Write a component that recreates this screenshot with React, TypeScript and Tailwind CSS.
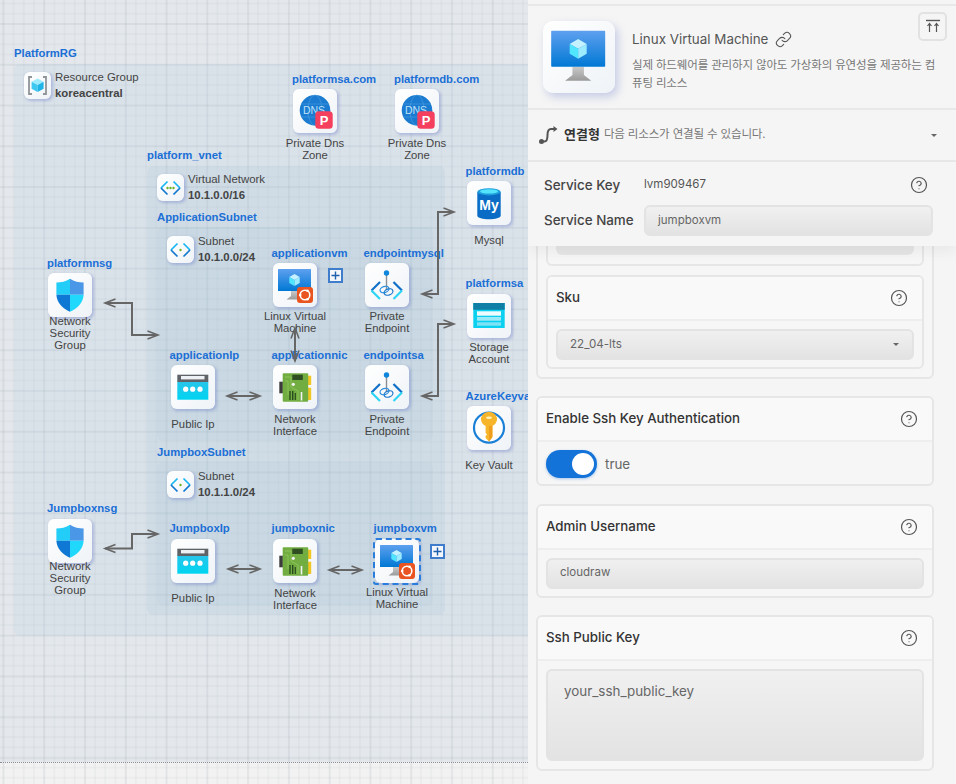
import React from "react";
import { CircleHelp, Link } from "lucide-react";

function Defs() {
  return (
    <svg className="absolute h-0 w-0">
      <defs>
        <linearGradient id="mon" x1="0" y1="0" x2="0" y2="1">
          <stop offset="0" stopColor="#5ea0ef" />
          <stop offset="1" stopColor="#0078d4" />
        </linearGradient>
        <linearGradient id="stand" x1="0" y1="0" x2="0" y2="1">
          <stop offset="0" stopColor="#c9c9c9" />
          <stop offset="1" stopColor="#9a9a9a" />
        </linearGradient>
        <linearGradient id="cyan" x1="0" y1="0" x2="0" y2="1">
          <stop offset="0" stopColor="#27c5ea" />
          <stop offset="1" stopColor="#00d4f0" />
        </linearGradient>
      </defs>
    </svg>
  );
}

function VmIcon({ badge = true }: { badge?: boolean }) {
  return (
    <svg viewBox="0 0 44 44" className="h-full w-full">
      <polygon points="18,28 25,28 25,33 29.5,36.5 13.5,36.5 18,33" fill="url(#stand)" />
      <rect x="5" y="6" width="33" height="22" rx="0.5" fill="url(#mon)" />
      <polygon points="21.5,11 26.7,14 21.5,17 16.3,14" fill="#c3f1ff" />
      <polygon points="16.3,14 21.5,17 21.5,23 16.3,20" fill="#50e6ff" />
      <polygon points="26.7,14 21.5,17 21.5,23 26.7,20" fill="#9cebff" />
      {badge && (
        <g>
          <rect x="24" y="24" width="16" height="16" rx="3" fill="#e95420" />
          <circle cx="32" cy="32" r="4.8" fill="none" stroke="#fff" strokeWidth="1.6" />
          <circle cx="27.2" cy="32" r="1.3" fill="#fff" />
          <circle cx="34.5" cy="27.8" r="1.3" fill="#fff" />
          <circle cx="34.5" cy="36.2" r="1.3" fill="#fff" />
        </g>
      )}
    </svg>
  );
}

function EndpointIcon() {
  return (
    <svg viewBox="0 0 44 44" className="h-full w-full">
      <line x1="21.5" y1="10" x2="21.5" y2="27" stroke="#8a8f96" strokeWidth="1.4" />
      <circle cx="21.5" cy="10" r="2.7" fill="#0f86dc" />
      <path d="M15 19 L6.5 27.5" stroke="#0f6fc8" strokeWidth="2.2" fill="none" />
      <path d="M6.5 27.5 L15 36" stroke="#2cd5f5" strokeWidth="2.2" fill="none" />
      <path d="M28.5 19 L37 27.5" stroke="#0f6fc8" strokeWidth="2.2" fill="none" />
      <path d="M37 27.5 L28.5 36" stroke="#2cd5f5" strokeWidth="2.2" fill="none" />
      <ellipse cx="19.5" cy="26.5" rx="4.6" ry="3" fill="none" stroke="#2a8fe0" strokeWidth="1.2" transform="rotate(-20 19.5 26.5)" />
      <ellipse cx="23.5" cy="29" rx="4.6" ry="3" fill="none" stroke="#1b78cc" strokeWidth="1.2" transform="rotate(-20 23.5 29)" />
    </svg>
  );
}

function NicIcon() {
  return (
    <svg viewBox="0 0 44 44" className="h-full w-full">
      <rect x="6.3" y="16.7" width="3.6" height="11.6" fill="#3c3c3c" />
      <rect x="35" y="10.7" width="3.2" height="9.3" fill="#f2c522" />
      <rect x="35" y="22.7" width="3.2" height="12.3" fill="#f2c522" />
      <rect x="9.7" y="8.3" width="25.5" height="28.4" rx="1" fill="#72ad42" />
      <path d="M12 12 H18 V22 L25 26 V35 M12 16 H15 V30" stroke="#95c95f" strokeWidth="0.8" fill="none" />
      <rect x="19.3" y="9.7" width="10.5" height="5.3" fill="#2f4f23" />
      <circle cx="20.3" cy="19.3" r="1.6" fill="#f2f2f2" />
      <rect x="16.3" y="26" width="1.4" height="9" fill="#284a1f" />
      <rect x="19" y="26" width="1.4" height="9" fill="#284a1f" />
      <rect x="21.7" y="28" width="1.2" height="7" fill="#284a1f" />
      <rect x="27.7" y="27" width="1.6" height="8.5" fill="#f2f2f2" />
    </svg>
  );
}

function IpIcon() {
  return (
    <svg viewBox="0 0 44 44" className="h-full w-full">
      <rect x="6.3" y="16.5" width="31" height="18.2" fill="url(#cyan)" />
      <rect x="6.3" y="9.7" width="31" height="7.3" fill="#5f6368" />
      <rect x="10" y="11" width="23.5" height="3.4" fill="#eef1f3" />
      <circle cx="14.7" cy="24.2" r="2.6" fill="#fff" />
      <circle cx="21.7" cy="24.2" r="2.6" fill="#fff" />
      <circle cx="29" cy="24.2" r="2.6" fill="#fff" />
    </svg>
  );
}

function ShieldIcon() {
  return (
    <svg viewBox="0 0 44 44" className="h-full w-full">
      <path d="M22 5.7 C18 8.6 13 9.4 8.4 9.6 V21.7 H22 Z" fill="#22cdf7" />
      <path d="M22 5.7 C26 8.6 31 9.4 35.6 9.6 V21.7 H22 Z" fill="#4a97e8" />
      <path d="M8.4 21.7 C8.8 30 15 35.5 22 38.7 V21.7 Z" fill="#0f78d4" />
      <path d="M35.6 21.7 C35.2 30 29 35.5 22 38.7 V21.7 Z" fill="#20d8fb" />
    </svg>
  );
}

function StorageIcon() {
  return (
    <svg viewBox="0 0 44 44" className="h-full w-full">
      <rect x="6.3" y="9" width="31.4" height="25" rx="0.6" fill="#0cd0ef" />
      <rect x="6.3" y="9" width="31.4" height="6.8" fill="#0f7fa6" />
      <rect x="10" y="17.3" width="24" height="4.4" fill="#eefcff" />
      <rect x="10" y="23" width="24" height="3.7" fill="#9ceaf8" />
      <rect x="10" y="28.3" width="24" height="3.4" fill="#7ee3f5" />
    </svg>
  );
}

function KeyIcon() {
  return (
    <svg viewBox="0 0 44 44" className="h-full w-full">
      <circle cx="22" cy="21.7" r="15" fill="#fff" stroke="#1a7fd6" strokeWidth="2.2" />
      <path d="M18.6 20 A8 7.5 0 1 1 25.4 20 V31 L22 35.5 L18.6 32 V30 L20 28.5 L18.6 27 Z" fill="#f7b52c" />
      <path d="M22 20 H25.4 V31 L22 35.5 Z" fill="#f09f1c" />
      <ellipse cx="22" cy="11.8" rx="3" ry="1.2" fill="#fff1b8" />
    </svg>
  );
}

function MysqlIcon() {
  return (
    <svg viewBox="0 0 44 44" className="h-full w-full">
      <path d="M10.3 11 V34.5 C10.3 37 16 38.3 22 38.3 C28 38.3 33.7 37 33.7 34.5 V11 Z" fill="#0a6cc4" />
      <ellipse cx="22" cy="10.8" rx="11.7" ry="3.6" fill="#1e9fdc" />
      <ellipse cx="22" cy="10.4" rx="9" ry="2.2" fill="#54e4fb" />
      <text x="22" y="28.5" textAnchor="middle" fontSize="14" fontWeight="700" fill="#fff" fontFamily="Liberation Sans, sans-serif">My</text>
    </svg>
  );
}

function DnsIcon() {
  return (
    <svg viewBox="0 0 44 44" className="h-full w-full">
      <circle cx="22" cy="21.3" r="15.3" fill="#1a7bd0" />
      <ellipse cx="22" cy="21.3" rx="7" ry="15.3" fill="none" stroke="#4b9fe3" strokeWidth="0.6" />
      <path d="M8 15 H36 M8 28 H36" stroke="#4b9fe3" strokeWidth="0.6" />
      <text x="21" y="25" textAnchor="middle" fontSize="10.5" fill="#bfe3fb" fontFamily="Liberation Sans, sans-serif">DNS</text>
      <rect x="22.3" y="22.3" width="17.4" height="17.4" rx="3.5" fill="#f43f5e" />
      <text x="31" y="35.5" textAnchor="middle" fontSize="13" fontWeight="700" fill="#fff" fontFamily="Liberation Sans, sans-serif">P</text>
    </svg>
  );
}

function RgIcon() {
  return (
    <svg viewBox="0 0 27 27" className="h-full w-full">
      <path d="M8 5 H5 V22 H8 M19 5 H22 V22 H19" fill="none" stroke="#8f9499" strokeWidth="1.8" />
      <polygon points="13.6,6.5 19.6,9.8 13.6,13 7.6,9.8" fill="#9cebff" />
      <polygon points="7.6,9.8 13.6,13 13.6,20 7.6,16.8" fill="#3cc8f0" />
      <polygon points="19.6,9.8 13.6,13 13.6,20 19.6,16.8" fill="#1fb4e8" />
    </svg>
  );
}

function NetIcon({ dots }: { dots: number[] }) {
  return (
    <svg viewBox="0 0 27 27" className="h-full w-full">
      <path d="M10.5 7.5 L4 14" stroke="#18b6f2" strokeWidth="1.7" fill="none" />
      <path d="M4 14 L10.5 20.5" stroke="#1277cf" strokeWidth="1.7" fill="none" />
      <path d="M16.5 7.5 L23 14" stroke="#18b6f2" strokeWidth="1.7" fill="none" />
      <path d="M23 14 L16.5 20.5" stroke="#1277cf" strokeWidth="1.7" fill="none" />
      {dots.map((x) => (
        <circle key={x} cx={x} cy="14" r="1.2" fill="#6fb52c" />
      ))}
    </svg>
  );
}

function Tile({ children, className }: { children: React.ReactNode; className: string }) {
  return (
    <div className={"rounded-[6px] bg-[linear-gradient(135deg,#ffffff,#eff3f7)] shadow-[1.5px_1.5px_3px_rgba(110,125,200,0.4)] " + className}>
      {children}
    </div>
  );
}

const Label = ({ className, children }: { className: string; children: React.ReactNode }) => (
  <div className={"absolute whitespace-nowrap text-[11.3px] leading-[14px] font-bold text-[#1b6fd6] " + className}>{children}</div>
);

function Group({ className, label, labelPos }: { className: string; label: string; labelPos: string }) {
  return (
    <>
      <div className={"absolute rounded-[6px] " + className} />
      <Label className={labelPos}>{label}</Label>
    </>
  );
}

function InfoTile({ pos, textPos, a, b, icon }: { pos: string; textPos: string; a: string; b: string; icon: React.ReactNode }) {
  return (
    <>
      <Tile className={"absolute h-[27px] w-[27px] " + pos}>{icon}</Tile>
      <div className={"absolute whitespace-nowrap text-[11.4px] leading-[15.5px] text-[#444] " + textPos}>
        <div>{a}</div>
        <div className="font-bold">{b}</div>
      </div>
    </>
  );
}

function Node({ xLabel, yLabel, xTile, yTile, xCap, yCap, label, cap, icon }: {
  xLabel: string; yLabel: string; xTile: string; yTile: string; xCap: string; yCap: string;
  label: string; cap: string[]; icon: React.ReactNode;
}) {
  return (
    <>
      <Label className={xLabel + " " + yLabel}>{label}</Label>
      <Tile className={"absolute h-[44px] w-[44px] " + xTile + " " + yTile}>{icon}</Tile>
      <div className={"absolute w-[90px] text-center text-[11.3px] leading-[12px] text-[#444] " + xCap + " " + yCap}>
        {cap.map((c) => (
          <div key={c}>{c}</div>
        ))}
      </div>
    </>
  );
}

function PlusBox({ pos }: { pos: string }) {
  return (
    <div className={"absolute flex h-[15px] w-[15px] items-center justify-center border-2 border-[#3f7ccb] bg-[#f3f6fa] " + pos}>
      <svg viewBox="0 0 11 11" className="h-[11px] w-[11px]">
        <path d="M5.5 1.5 V9.5 M1.5 5.5 H9.5" stroke="#1d5fae" strokeWidth="1.4" />
      </svg>
    </div>
  );
}

function Arrows() {
  const paths = [
    "M105 303 H132 V335 H158",
    "M105 548.5 H132 V534 H158",
    "M227 396 H260",
    "M228 569 H260",
    "M329 570 H362",
    "M295 328 V361",
    "M422 294 H438 V212 H454",
    "M422 396 H438 V324 H454",
  ];
  return (
    <svg className="absolute left-0 top-0 h-[784px] w-[528px]" viewBox="0 0 528 784">
      <defs>
        <marker id="ah" markerUnits="userSpaceOnUse" markerWidth="14" markerHeight="12" refX="11" refY="5" orient="auto-start-reverse" viewBox="0 0 14 12">
          <path d="M0.5 1 L11 5 L0.5 9" fill="none" stroke="#666" strokeWidth="1.6" />
        </marker>
      </defs>
      {paths.map((d) => (
        <path key={d} d={d} fill="none" stroke="#666" strokeWidth="2" markerStart="url(#ah)" markerEnd="url(#ah)" />
      ))}
    </svg>
  );
}

function Canvas() {
  return (
    <div className="relative h-[784px] w-[528px] shrink-0 overflow-hidden bg-[#e4e8ec] font-['Liberation_Sans',Arial,sans-serif]">
      <div className="absolute left-0 top-[762px] h-[22px] w-[528px] border-t border-dotted border-[#8f8f8f] bg-[#f2f2f2]" />
      <div className="absolute inset-0 bg-[image:linear-gradient(to_right,rgba(150,160,170,0.1)_1.5px,transparent_1.5px),linear-gradient(to_bottom,rgba(150,160,170,0.1)_1.5px,transparent_1.5px),linear-gradient(to_right,rgba(160,170,180,0.09)_1.5px,transparent_1.5px),linear-gradient(to_bottom,rgba(160,170,180,0.09)_1.5px,transparent_1.5px)] bg-[size:40.8px_40.8px,40.8px_40.8px,10.2px_10.2px,10.2px_10.2px] bg-[position:2.5px_0px,0px_23px,2.5px_0px,0px_2.6px]" />

      <Group className="left-[14px] top-[64px] h-[572px] w-[530px] bg-[rgba(160,195,220,0.15)]" label="PlatformRG" labelPos="left-[14px] top-[46px]" />
      <Group className="left-[147px] top-[166px] h-[449px] w-[298px] bg-[rgba(150,185,210,0.13)]" label="platform_vnet" labelPos="left-[147px] top-[148px]" />
      <Group className="left-[157px] top-[227px] h-[214px] w-[276px] bg-[rgba(150,185,210,0.1)]" label="ApplicationSubnet" labelPos="left-[157px] top-[210px]" />
      <Group className="left-[157px] top-[462px] h-[144px] w-[276px] bg-[rgba(150,185,210,0.1)]" label="JumpboxSubnet" labelPos="left-[157px] top-[445px]" />

      <InfoTile pos="left-[24px] top-[72px]" textPos="left-[55px] top-[70px]" a="Resource Group" b="koreacentral" icon={<RgIcon />} />
      <InfoTile pos="left-[157px] top-[174px]" textPos="left-[188px] top-[172px]" a="Virtual Network" b="10.1.0.0/16" icon={<NetIcon dots={[10.5, 13.5, 16.5]} />} />
      <InfoTile pos="left-[167px] top-[236px]" textPos="left-[198px] top-[234px]" a="Subnet" b="10.1.0.0/24" icon={<NetIcon dots={[13.5]} />} />
      <InfoTile pos="left-[167px] top-[471px]" textPos="left-[198px] top-[469px]" a="Subnet" b="10.1.1.0/24" icon={<NetIcon dots={[13.5]} />} />

      <Node xLabel="left-[292px]" yLabel="top-[72px]" xTile="left-[293px]" yTile="top-[89px]" xCap="left-[270px]" yCap="top-[137px]" label="platformsa.com" cap={["Private Dns", "Zone"]} icon={<DnsIcon />} />
      <Node xLabel="left-[394px]" yLabel="top-[72px]" xTile="left-[395px]" yTile="top-[89px]" xCap="left-[372px]" yCap="top-[137px]" label="platformdb.com" cap={["Private Dns", "Zone"]} icon={<DnsIcon />} />
      <Node xLabel="left-[465.5px]" yLabel="top-[164px]" xTile="left-[467px]" yTile="top-[181px]" xCap="left-[444px]" yCap="top-[234px]" label="platformdb" cap={["Mysql"]} icon={<MysqlIcon />} />
      <Node xLabel="left-[465.5px]" yLabel="top-[276px]" xTile="left-[467px]" yTile="top-[294px]" xCap="left-[444px]" yCap="top-[341px]" label="platformsa" cap={["Storage", "Account"]} icon={<StorageIcon />} />
      <Node xLabel="left-[465.5px]" yLabel="top-[389px]" xTile="left-[467px]" yTile="top-[406px]" xCap="left-[444px]" yCap="top-[459px]" label="AzureKeyvault" cap={["Key Vault"]} icon={<KeyIcon />} />

      <Node xLabel="left-[271.5px]" yLabel="top-[246px]" xTile="left-[273px]" yTile="top-[263px]" xCap="left-[250px]" yCap="top-[310px]" label="applicationvm" cap={["Linux Virtual", "Machine"]} icon={<VmIcon />} />
      <Node xLabel="left-[363.5px]" yLabel="top-[246px]" xTile="left-[365px]" yTile="top-[263px]" xCap="left-[342px]" yCap="top-[310px]" label="endpointmysql" cap={["Private", "Endpoint"]} icon={<EndpointIcon />} />
      <Node xLabel="left-[271.5px]" yLabel="top-[348px]" xTile="left-[273px]" yTile="top-[365px]" xCap="left-[250px]" yCap="top-[413px]" label="applicationnic" cap={["Network", "Interface"]} icon={<NicIcon />} />
      <Node xLabel="left-[363.5px]" yLabel="top-[348px]" xTile="left-[365px]" yTile="top-[365px]" xCap="left-[342px]" yCap="top-[413px]" label="endpointsa" cap={["Private", "Endpoint"]} icon={<EndpointIcon />} />
      <Node xLabel="left-[169.5px]" yLabel="top-[348px]" xTile="left-[171px]" yTile="top-[365px]" xCap="left-[148px]" yCap="top-[418px]" label="applicationIp" cap={["Public Ip"]} icon={<IpIcon />} />
      <Node xLabel="left-[47px]" yLabel="top-[256px]" xTile="left-[48px]" yTile="top-[273px]" xCap="left-[25px]" yCap="top-[315px]" label="platformnsg" cap={["Network", "Security", "Group"]} icon={<ShieldIcon />} />

      <Node xLabel="left-[47px]" yLabel="top-[501px]" xTile="left-[48px]" yTile="top-[519px]" xCap="left-[25px]" yCap="top-[560px]" label="Jumpboxnsg" cap={["Network", "Security", "Group"]} icon={<ShieldIcon />} />
      <Node xLabel="left-[169.5px]" yLabel="top-[521px]" xTile="left-[171px]" yTile="top-[539px]" xCap="left-[148px]" yCap="top-[592px]" label="JumpboxIp" cap={["Public Ip"]} icon={<IpIcon />} />
      <Node xLabel="left-[271.5px]" yLabel="top-[521px]" xTile="left-[273px]" yTile="top-[539px]" xCap="left-[250px]" yCap="top-[587px]" label="jumpboxnic" cap={["Network", "Interface"]} icon={<NicIcon />} />
      <Node xLabel="left-[373.5px]" yLabel="top-[521px]" xTile="left-[375px]" yTile="top-[539px]" xCap="left-[352px]" yCap="top-[586px]" label="jumpboxvm" cap={["Linux Virtual", "Machine"]} icon={<VmIcon />} />
      <div className="absolute left-[372.5px] top-[537.5px] h-[47px] w-[48px] rounded-[3px] border-2 border-dashed border-[#2a7ddc]" />

      <PlusBox pos="left-[328px] top-[268px]" />
      <PlusBox pos="left-[430px] top-[544px]" />
      <Arrows />
    </div>
  );
}

function Help() {
  return <CircleHelp size={18} strokeWidth={1.6} className="shrink-0 text-[#555]" />;
}

const fieldCls =
  "rounded-[6px] border-2 border-[#e3e3e3] bg-[linear-gradient(to_bottom,#f0f0f0,#e3e3e3)] text-[#666]";

function Card({ title, children, className = "" }: { title: string; children: React.ReactNode; className?: string }) {
  return (
    <div className={"overflow-hidden rounded-[6px] border-2 border-[#e6e6e6] bg-[#f6f6f6] " + className}>
      <div className="flex h-[44px] items-center justify-between border-b-2 border-[#eeeeee] bg-[#f9f9f9] pl-[8px] pr-[14px] text-[13.3px] font-medium text-[#333]">
        <span>{title}</span>
        <Help />
      </div>
      <div className="px-[8px] pt-[8px]">{children}</div>
    </div>
  );
}

function Caret() {
  return <span className="h-0 w-0 border-x-[3px] border-t-[3.5px] border-x-transparent border-t-[#666]" />;
}

function Panel() {
  return (
    <div className="relative flex h-[784px] w-[428px] shrink-0 flex-col overflow-hidden bg-[#f5f5f5] font-['Inter','Noto_Sans_CJK_KR',sans-serif]">
      <div className="mt-[4px] flex h-[104px] shrink-0 border-t-2 border-t-[#e8e8e8] pl-[15px] pt-[15px]">
        <Tile className="h-[72px] w-[72px] shrink-0 !rounded-[10px] shadow-[3px_4px_8px_rgba(110,125,200,0.35)]">
          <VmIcon badge={false} />
        </Tile>
        <div className="ml-[17px] w-[306px]">
          <div className="mt-[7px] flex h-[22px] items-center text-[13.4px] text-[#555]">
            <span>Linux Virtual Machine</span>
            <Link size={17} strokeWidth={1.5} className="ml-[7px] text-[#555]" />
          </div>
          <p className="mt-[6px] break-all text-[11.5px] leading-[18px] tracking-[-0.15px] text-[#777]">
            실제 하드웨어를 관리하지 않아도 가상화의 유연성을 제공하는 컴퓨팅 리소스
          </p>
        </div>
      </div>
      <button className="absolute left-[390px] top-[12px] flex h-[29px] w-[29px] items-center justify-center rounded-[5px] border-2 border-[#e2e2e2]">
        <svg viewBox="0 0 16 16" className="h-[16px] w-[16px]" fill="none" stroke="#555" strokeWidth="1.2">
          <path d="M1 1.5 H15" strokeWidth="1.4" />
          <path d="M4.5 13 V5 M2.5 7 L4.5 4.5 L6.5 7 M11.5 13 V5 M9.5 7 L11.5 4.5 L13.5 7" />
        </svg>
      </button>

      <div className="flex h-[54px] shrink-0 items-center justify-between border-y-2 border-[#e8e8e8] pl-[10px] pr-[19px]">
        <div className="flex items-center">
          <svg viewBox="0 0 20 20" className="h-[20px] w-[20px]" fill="none">
            <circle cx="3.5" cy="16.5" r="2.5" fill="#555" />
            <path d="M3.5 16.5 H6.5 C9 16.5 9.5 14.5 9.5 10 C9.5 5.5 10.5 4 13 4 H17" stroke="#555" strokeWidth="2" />
            <path d="M15.5 1 L19.5 4 L15.5 7 Z" fill="#555" />
          </svg>
          <span className="ml-[6px] text-[13px] font-bold text-[#333]">연결형</span>
          <span className="ml-[4px] text-[11.5px] tracking-[-0.15px] text-[#777]">다음 리소스가 연결될 수 있습니다.</span>
        </div>
        <Caret />
      </div>

      <div className="z-10 shrink-0 bg-[#f5f5f5] pb-[10px] pl-[16px] pr-[23px] shadow-[0_6px_12px_rgba(0,0,0,0.05)]">
        <div className="mt-[8px] flex h-[30px] items-center text-[13.4px] text-[#444]">
          <span className="w-[100px] font-medium">Service Key</span>
          <span className="flex-1 text-[11.5px] text-[#555]">lvm909467</span>
          <span className="mr-[5px]"><Help /></span>
        </div>
        <div className="mt-[5px] flex h-[31px] items-center text-[13.4px] text-[#444]">
          <span className="w-[100px] font-medium">Service Name</span>
          <div className={"flex h-[31px] flex-1 items-center pl-[12px] text-[11.5px] " + fieldCls}>jumpboxvm</div>
        </div>
      </div>

      <div className="min-h-0 flex-1 overflow-hidden pl-[8px] pr-[22px]">
        <div className="-mt-[10px] rounded-[6px] border-2 border-[#e6e6e6] bg-[#f6f6f6] p-[8px] pt-0">
          <div className="h-[28px] rounded-b-[6px] border-2 border-t-0 border-[#e6e6e6] bg-[#f6f6f6] px-[8px]">
            <div className="h-[17px] rounded-b-[6px] bg-[#e6e6e6]" />
          </div>
          <Card title="Sku" className="mt-[9px] h-[94px]">
            <div className={"flex h-[31px] items-center justify-between pl-[12px] pr-[13px] text-[11.6px] " + fieldCls}>
              <span>22_04-lts</span>
              <Caret />
            </div>
          </Card>
        </div>
        <Card title="Enable Ssh Key Authentication" className="mt-[17px] h-[90px]">
          <div className="flex h-[28px] items-center">
            <div className="flex h-[28px] w-[51px] items-center justify-end rounded-full bg-[#1473d8] pr-[3px] shadow-[0_1px_3px_rgba(20,115,216,0.35)]">
              <div className="h-[22px] w-[22px] rounded-full bg-white" />
            </div>
            <span className="ml-[8px] text-[13.4px] text-[#666]">true</span>
          </div>
        </Card>
        <Card title="Admin Username" className="mt-[17.5px] h-[94px]">
          <div className={"flex h-[31px] items-center pl-[12px] text-[11.5px] " + fieldCls}>cloudraw</div>
        </Card>
        <Card title="Ssh Public Key" className="mt-[17px] h-[156px]">
          <div className={"h-[92px] pl-[16px] pt-[10px] text-[13.4px] leading-[20px] " + fieldCls}>your_ssh_public_key</div>
        </Card>
      </div>
    </div>
  );
}

export default function App() {
  return (
    <div className="flex h-[784px] w-[956px] overflow-hidden">
      <Defs />
      <Canvas />
      <Panel />
    </div>
  );
}
